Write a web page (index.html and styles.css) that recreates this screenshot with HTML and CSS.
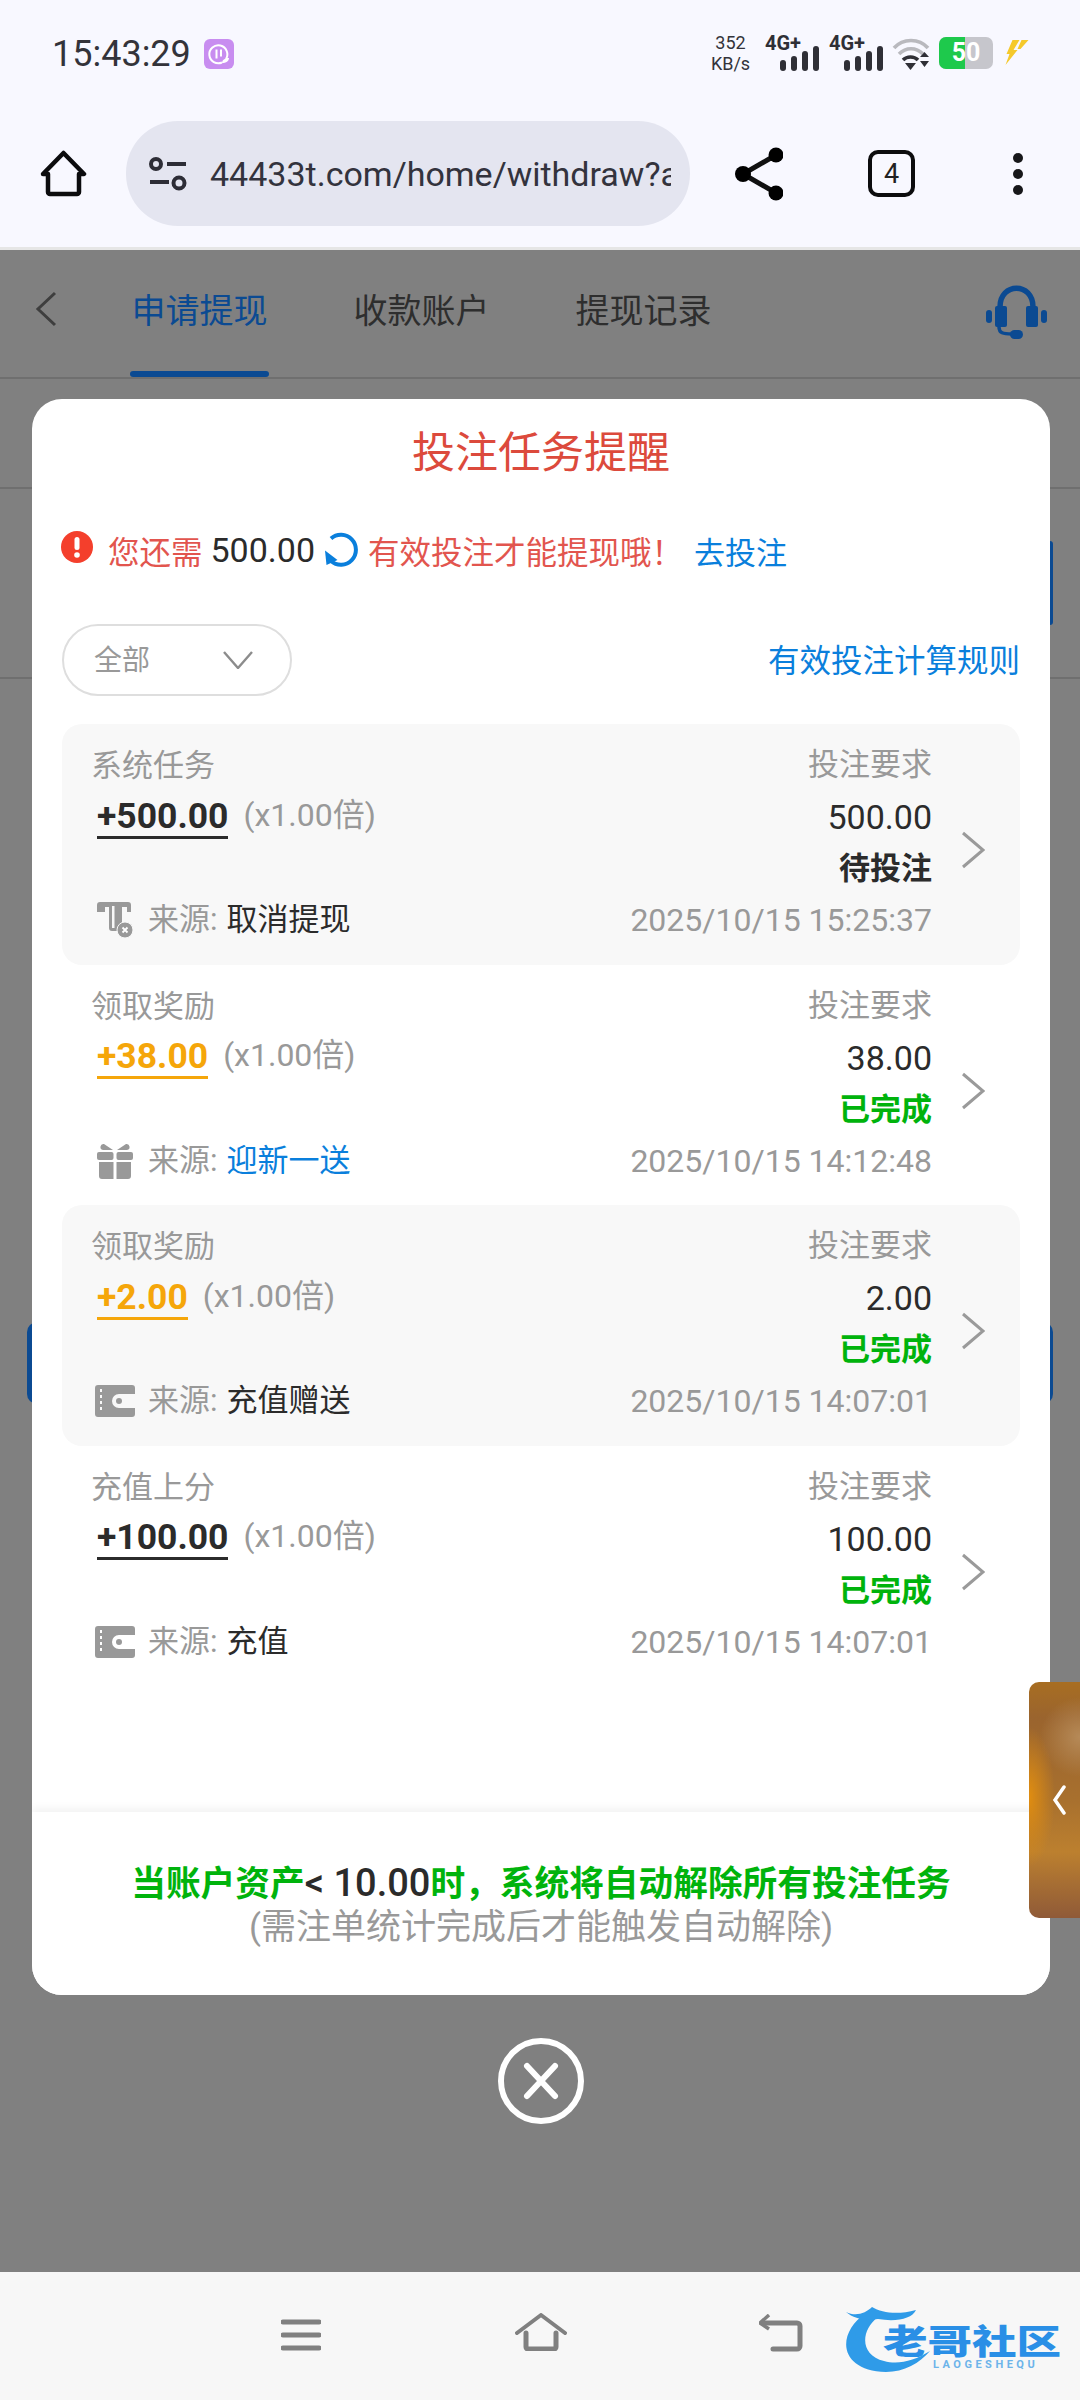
FILE: index.html
```html
<!DOCTYPE html>
<html lang="zh-CN">
<head>
    <meta charset="UTF-8">
    <meta name="viewport" content="width=device-width, initial-scale=1.0">
    <title>投注任务提醒</title>
    <link rel="stylesheet" href="styles.css">
</head>
<body>
    <header class="chrome">
        <div class="status-bar">
            <div class="status-left">
                <span class="clock">15:43:29</span>
                <svg class="app-badge" viewBox="0 0 30 30"><rect width="30" height="30" rx="6" fill="#c88df0"/><path d="M22 20A9 9 0 1 0 18 23.500" fill="none" stroke="#fff" stroke-width="2"/><path d="M12.500 10.500v9M17 10.500v7" stroke="#fff" stroke-width="2"/><path d="M18 24c0-3 3-5 7-5 0 3-3 5-7 5z" fill="#fff"/></svg>
            </div>
            <div class="status-right">
                <div class="net-speed"><span>352</span><span>KB/s</span></div>
                <div class="signal">
                    <span class="signal-label">4G+</span>
                    <div class="bars"><i class="b1"></i><i class="b2"></i><i class="b3"></i><i class="b4"></i></div>
                </div>
                <div class="signal">
                    <span class="signal-label">4G+</span>
                    <div class="bars"><i class="b1"></i><i class="b2"></i><i class="b3"></i><i class="b4"></i></div>
                </div>
                <svg class="wifi" viewBox="0 0 38 33">
                    <path d="M2 11C11 1 27 1 36 11" fill="none" stroke="#b9b9be" stroke-width="3.600"/>
                    <path d="M7 17C14 10 24 10 31 17" fill="none" stroke="#b9b9be" stroke-width="3.600"/>
                    <path d="M11 23C15 19 22 19 26 23" fill="none" stroke="#2f2f36" stroke-width="3.600"/>
                    <path d="M13 26h11l-5.500 7z" fill="#2f2f36"/>
                    <path d="M28 20l4.500-5 4.500 5zM28 24h9l-4.500 6z" fill="#2f2f36"/>
                </svg>
                <div class="battery"><span class="battery-fill"></span><span class="battery-num">50</span></div>
                <svg class="bolt" viewBox="0 0 25 25"><path d="M9 0h7L10 10h4L2 25l4-11H3zM18 0h7L17 9h-3z" fill="#f5c92c"/></svg>
            </div>
        </div>
        <div class="url-row">
            <svg class="home-icon" viewBox="0 0 47 47"><path d="M3 24L23.500 3 44 24h-5v18a2 2 0 0 1-2 2H10a2 2 0 0 1-2-2V24z" fill="none" stroke="#0c0c0e" stroke-width="4.500" stroke-linejoin="round"/></svg>
            <div class="url-pill">
                <svg class="tune-icon" viewBox="0 0 40 34" fill="none" stroke="#2d2d36" stroke-width="4"><circle cx="8" cy="7" r="5"/><path d="M19 7h19M2 25h19"/><circle cx="31" cy="26" r="5.500"/></svg>
                <span class="url-text">44433t.com/home/withdraw?a</span>
            </div>
            <svg class="share-icon" viewBox="0 0 48 54"><path d="M41 8L8 27l33 19" fill="none" stroke="#111" stroke-width="5"/><circle cx="41" cy="8" r="7.500"/><circle cx="8" cy="27" r="8"/><circle cx="41" cy="46" r="7.500"/></svg>
            <div class="tab-count">4</div>
            <div class="more-dots"><i></i><i></i><i></i></div>
        </div>
    </header>

    <main class="page">
        <nav class="page-tabs">
            <svg class="back-icon" viewBox="0 0 22 36"><path d="M20 2L3 18l17 16" fill="none" stroke="#3e3e3e" stroke-width="3"/></svg>
            <span class="page-tab active">申请提现</span>
            <span class="page-tab">收款账户</span>
            <span class="page-tab">提现记录</span>
            <svg class="headset" viewBox="0 0 61 54" fill="#0b4a92">
                <path d="M14 26V22C14 -3 47 -3 47 22v4" fill="none" stroke="#0b4a92" stroke-width="5.500"/>
                <rect x="9" y="21" width="12" height="21" rx="2"/>
                <rect x="40" y="21" width="12" height="21" rx="2"/>
                <rect x="0" y="25" width="6" height="13" rx="3"/>
                <rect x="55" y="25" width="6" height="13" rx="3"/>
                <path d="M13 42c0 6 4 7 13 7" fill="none" stroke="#0b4a92" stroke-width="3.500"/>
                <rect x="24" y="45" width="13" height="9" rx="4.500"/>
            </svg>
        </nav>
        <div class="page-section"></div>
        <div class="page-section tall"><span class="edge-blue"></span></div>
        <div class="page-button"></div>

        <div class="overlay">
            <section class="modal">
                <h2 class="modal-title">投注任务提醒</h2>
                <div class="notice">
                    <svg class="alert-icon" viewBox="0 0 32 32"><circle cx="16" cy="16" r="16" fill="#f43f2c"/><rect x="13.500" y="6" width="5" height="13" rx="2.500" fill="#fff"/><circle cx="16" cy="24" r="2.800" fill="#fff"/></svg>
                    <span class="notice-red">您还需</span>
                    <span class="notice-num">500.00</span>
                    <svg class="refresh-icon" viewBox="0 0 36 36"><path d="M8 6.500A15 15 0 1 1 8 29" fill="none" stroke="#0a7fdc" stroke-width="4"/><path d="M2 18.500l1.500 14.500 11-5z" fill="#0a7fdc"/></svg>
                    <span class="notice-red">有效投注才能提现哦！</span>
                    <a class="notice-link">去投注</a>
                </div>
                <div class="filter-row">
                    <div class="filter-select">
                        <span>全部</span>
                        <svg viewBox="0 0 30 18"><path d="M1 1l14 16L29 1" fill="none" stroke="#8c8c8c" stroke-width="2.400"/></svg>
                    </div>
                    <a class="rule-link">有效投注计算规则</a>
                </div>

                <div class="task-list">
                    <article class="task shaded">
                        <div class="task-grid">
                            <span class="task-name">系统任务</span>
                            <span class="task-req">投注要求</span>
                            <div class="task-amount"><span class="amount dark">+500.00</span><span class="rate">(x1.00倍)</span></div>
                            <span class="task-value">500.00</span>
                            <span class="task-state pending">待投注</span>
                            <div class="task-source">
                                <svg class="src-icon" viewBox="0 0 36 36"><path d="M3 0h28a3 3 0 0 1 3 3v7h-4V5H25v21a3 3 0 0 1-3 3H15a3 3 0 0 1-3-3V5H8v5H0V3a3 3 0 0 1 3-3z" fill="#999"/><rect x="15" y="4" width="2.500" height="22" fill="#f8f8f8"/><circle cx="28" cy="28" r="8" fill="#999" stroke="#f8f8f8" stroke-width="1"/><path d="M25.500 25.500l5 5M30.500 25.500l-5 5" stroke="#fff" stroke-width="1.800"/></svg>
                                <span class="src-label">来源:</span><span class="src-value">取消提现</span>
                            </div>
                            <span class="task-time">2025/10/15 15:25:37</span>
                        </div>
                        <svg class="task-arrow" viewBox="0 0 24 38"><path d="M2 2l20 17L2 36" fill="none" stroke="#9a9a9a" stroke-width="3"/></svg>
                    </article>

                    <article class="task">
                        <div class="task-grid">
                            <span class="task-name">领取奖励</span>
                            <span class="task-req">投注要求</span>
                            <div class="task-amount"><span class="amount gold">+38.00</span><span class="rate">(x1.00倍)</span></div>
                            <span class="task-value">38.00</span>
                            <span class="task-state done">已完成</span>
                            <div class="task-source">
                                <svg class="src-icon" viewBox="0 0 36 36" fill="#999"><path d="M7 1l9 6H6a3 3 0 0 1 1-6zM29 1l-9 6h10a3 3 0 0 0-1-6z"/><rect x="0" y="9" width="16.500" height="8" rx="2"/><rect x="19.500" y="9" width="16.500" height="8" rx="2"/><path d="M2 19h14.500v17H5a3 3 0 0 1-3-3zM19.500 19H34v14a3 3 0 0 1-3 3H19.500z"/></svg>
                                <span class="src-label">来源:</span><span class="src-value link">迎新一送</span>
                            </div>
                            <span class="task-time">2025/10/15 14:12:48</span>
                        </div>
                        <svg class="task-arrow" viewBox="0 0 24 38"><path d="M2 2l20 17L2 36" fill="none" stroke="#9a9a9a" stroke-width="3"/></svg>
                    </article>

                    <article class="task shaded">
                        <div class="task-grid">
                            <span class="task-name">领取奖励</span>
                            <span class="task-req">投注要求</span>
                            <div class="task-amount"><span class="amount gold">+2.00</span><span class="rate">(x1.00倍)</span></div>
                            <span class="task-value">2.00</span>
                            <span class="task-state done">已完成</span>
                            <div class="task-source">
                                <svg class="src-icon wallet" viewBox="0 0 40 32"><path d="M3 0h34a3 3 0 0 1 3 3v6H24a7 7 0 0 0 0 14h16v6a3 3 0 0 1-3 3H3a3 3 0 0 1-3-3V3a3 3 0 0 1 3-3z" fill="#999"/><circle cx="24" cy="16" r="3" fill="#999"/><path d="M6 4v24" stroke="#f8f8f8" stroke-width="2" stroke-dasharray="3 3"/></svg>
                                <span class="src-label">来源:</span><span class="src-value">充值赠送</span>
                            </div>
                            <span class="task-time">2025/10/15 14:07:01</span>
                        </div>
                        <svg class="task-arrow" viewBox="0 0 24 38"><path d="M2 2l20 17L2 36" fill="none" stroke="#9a9a9a" stroke-width="3"/></svg>
                    </article>

                    <article class="task">
                        <div class="task-grid">
                            <span class="task-name">充值上分</span>
                            <span class="task-req">投注要求</span>
                            <div class="task-amount"><span class="amount dark">+100.00</span><span class="rate">(x1.00倍)</span></div>
                            <span class="task-value">100.00</span>
                            <span class="task-state done">已完成</span>
                            <div class="task-source">
                                <svg class="src-icon wallet" viewBox="0 0 40 32"><path d="M3 0h34a3 3 0 0 1 3 3v6H24a7 7 0 0 0 0 14h16v6a3 3 0 0 1-3 3H3a3 3 0 0 1-3-3V3a3 3 0 0 1 3-3z" fill="#999"/><circle cx="24" cy="16" r="3" fill="#999"/><path d="M6 4v24" stroke="#fff" stroke-width="2" stroke-dasharray="3 3"/></svg>
                                <span class="src-label">来源:</span><span class="src-value">充值</span>
                            </div>
                            <span class="task-time">2025/10/15 14:07:01</span>
                        </div>
                        <svg class="task-arrow" viewBox="0 0 24 38"><path d="M2 2l20 17L2 36" fill="none" stroke="#9a9a9a" stroke-width="3"/></svg>
                    </article>
                </div>

                <footer class="modal-foot">
                    <p class="foot-main">当账户资产<span class="foot-num">&lt; 10.00</span>时，系统将自动解除所有投注任务</p>
                    <p class="foot-sub">(需注单统计完成后才能触发自动解除)</p>
                </footer>
            </section>
            <svg class="close-btn" viewBox="0 0 86 86"><circle cx="43" cy="43" r="40" fill="none" stroke="#fff" stroke-width="6"/><path d="M29 28l28 30M57 28L29 58" stroke="#fff" stroke-width="6" stroke-linecap="round"/></svg>
        </div>

        <div class="side-tab">
            <svg viewBox="0 0 14 30"><path d="M12 2L3 15l9 13" fill="none" stroke="#fff" stroke-width="3.500" stroke-linecap="round"/></svg>
        </div>
    </main>

    <nav class="system-nav">
        <svg class="menu-icon" viewBox="0 0 40 32"><path d="M2 3h36M2 16h36M2 29h36" stroke="#808080" stroke-width="5" stroke-linecap="round"/></svg>
        <svg class="house-icon" viewBox="0 0 52 38"><path d="M2 20L26 2l24 18" fill="none" stroke="#808080" stroke-width="4" stroke-linecap="round" stroke-linejoin="round"/><path d="M11 20v14a2 2 0 0 0 2 2h26a2 2 0 0 0 2-2V20" fill="none" stroke="#808080" stroke-width="5" stroke-linecap="round"/></svg>
        <svg class="return-icon" viewBox="0 0 44 38"><path d="M5 9h33a3 3 0 0 1 3 3v20a3 3 0 0 1-3 3H14" fill="none" stroke="#808080" stroke-width="5" stroke-linecap="round"/><path d="M10 1L1 9l9 6" fill="none" stroke="#808080" stroke-width="3.500"/></svg>
        <div class="watermark">
            <svg class="dragon" viewBox="0 0 220 68" fill="#2f9be8">
                <path d="M24 8C-6 28 -4 66 44 67C62 67 78 58 88 46C72 56 56 60 42 56C18 50 18 26 36 12z"/>
                <path d="M4 7C14 12 24 8 30 2C40 8 56 10 74 5C70 14 54 17 36 14C24 16 12 14 4 7z"/>
            </svg>
            <span class="wm-name">老哥社区</span>
            <span class="wm-sub">LAOGESHEQU</span>
        </div>
    </nav>
</body>
</html>
```

FILE: styles.css
```css
* {
    box-sizing: border-box;
}
body {
    width: 1080px;
    height: 2400px;
    margin: 0;
    display: flex;
    flex-direction: column;
    overflow: hidden;
    font-family: Roboto, "Noto Sans CJK SC", sans-serif;
    background-color: #808080;
    color: #2b2b2b;
}
p, h2 {
    margin: 0;
    font-weight: 400;
}

/* browser chrome */
.chrome {
    height: 250px;
    background-color: #f8f8ff;
    border-bottom: 3px solid #e6e6e6;
    flex-shrink: 0;
}
.status-bar {
    height: 121px;
    padding: 37px 50px 0 52px;
    display: flex;
    justify-content: space-between;
    align-items: flex-start;
}
.status-left {
    display: flex;
    align-items: center;
    gap: 13px;
}
.clock {
    font-size: 36px;
    line-height: 34px;
    color: #33333a;
}
.app-badge {
    width: 30px;
    height: 30px;
}
.status-right {
    display: flex;
    align-items: flex-start;
    height: 36px;
}
.net-speed {
    width: 51px;
    margin: -5px 9px 0 0;
    display: flex;
    flex-direction: column;
    align-items: center;
    font-size: 18px;
    line-height: 21px;
    color: #33333a;
}
.signal {
    position: relative;
    width: 54px;
    height: 36px;
}
.signal + .signal {
    margin-left: 10px;
}
.signal-label {
    position: absolute;
    left: 0;
    top: -6px;
    font-size: 20px;
    font-weight: 700;
    color: #2f2f36;
}
.bars {
    position: absolute;
    right: 0;
    bottom: 2px;
    display: flex;
    align-items: flex-end;
    gap: 5px;
}
.bars i {
    width: 6px;
    background-color: #2f2f36;
    border-radius: 3px;
}
.bars .b1 { height: 11px; }
.bars .b2 { height: 15px; }
.bars .b3 { height: 20px; }
.bars .b4 { height: 25px; }
.wifi {
    width: 38px;
    height: 33px;
    margin-left: 9px;
}
.battery {
    position: relative;
    width: 54px;
    height: 32px;
    margin-left: 9px;
    border-radius: 7px;
    background-color: #c6c6cc;
    overflow: hidden;
}
.battery-fill {
    position: absolute;
    left: 0;
    top: 0;
    bottom: 0;
    width: 26px;
    background-color: #1ec94c;
}
.battery-num {
    position: absolute;
    left: 0;
    right: 0;
    text-align: center;
    font-size: 25px;
    line-height: 32px;
    font-weight: 700;
    color: #fff;
}
.bolt {
    width: 28px;
    height: 25px;
    margin: 3px 0 0 9px;
}
.url-row {
    display: flex;
    align-items: center;
    height: 105px;
}
.home-icon {
    width: 47px;
    height: 47px;
    margin-left: 40px;
}
.url-pill {
    width: 564px;
    height: 105px;
    margin-left: 39px;
    padding-left: 22px;
    border-radius: 52px;
    background-color: #e4e5f0;
    display: flex;
    align-items: center;
    overflow: hidden;
}
.tune-icon {
    width: 40px;
    height: 34px;
    flex-shrink: 0;
}
.url-text {
    width: 461px;
    margin-left: 22px;
    overflow: hidden;
    white-space: nowrap;
    font-size: 34px;
    color: #33333d;
}
.share-icon {
    width: 48px;
    height: 54px;
    margin-left: 45px;
}
.tab-count {
    width: 47px;
    height: 47px;
    margin-left: 85px;
    border: 4.500px solid #0c0c0e;
    border-radius: 10px;
    display: flex;
    justify-content: center;
    align-items: center;
    font-size: 27px;
    color: #222;
}
.more-dots {
    margin-left: 98px;
    display: flex;
    flex-direction: column;
    gap: 6px;
}
.more-dots i {
    width: 10px;
    height: 10px;
    border-radius: 50%;
    background-color: #17171a;
}

/* page behind the dialog */
.page {
    position: relative;
    flex: 1;
    background-color: #808080;
}
.page-tabs {
    display: flex;
    align-items: center;
    height: 129px;
    padding-bottom: 10px;
    border-bottom: 2px solid #6f6f6f;
    position: relative;
}
.back-icon {
    width: 22px;
    height: 36px;
    margin-left: 35px;
}
.page-tab {
    width: 139px;
    margin-right: 83px;
    text-align: center;
    font-size: 34px;
    color: #2e2e2e;
}
.back-icon + .page-tab {
    margin-left: 73px;
}
.page-tab.active {
    position: relative;
    color: #0b4a92;
}
.page-tab.active::after {
    content: "";
    position: absolute;
    left: 0;
    right: 0;
    bottom: -44px;
    height: 6px;
    border-radius: 3px;
    background-color: #0b4a92;
}
.headset {
    position: absolute;
    left: 986px;
    top: 35px;
    width: 61px;
    height: 54px;
}
.page-section {
    position: relative;
    height: 110px;
    border-bottom: 2px solid #6f6f6f;
}
.page-section.tall {
    height: 190px;
}
.edge-blue {
    position: absolute;
    right: 27px;
    top: 52px;
    width: 3px;
    height: 84px;
    border-radius: 0 6px 6px 0;
    background-color: #0b4a92;
}
.page-button {
    height: 82px;
    margin: 643px 27px 0;
    border-radius: 10px;
    background-color: #0b4a92;
}
.overlay {
    position: absolute;
    inset: 0;
    padding: 149px 30px 0 32px;
    display: flex;
    flex-direction: column;
    align-items: center;
}
.modal {
    width: 1018px;
    height: 1596px;
    border-radius: 30px;
    background-color: #fff;
    display: flex;
    flex-direction: column;
    overflow: hidden;
}
.modal-title {
    height: 107px;
    text-align: center;
    font-size: 43px;
    line-height: 108px;
    color: #dc4a3c;
}
.notice {
    display: flex;
    align-items: center;
    height: 88px;
    padding-left: 29px;
    margin-bottom: 30px;
    font-size: 31.500px;
    white-space: nowrap;
}
.alert-icon {
    width: 32px;
    height: 32px;
    margin: -6px 15px 0 0;
}
.notice-red {
    color: #e2554e;
}
.notice-num {
    margin: 0 8px 0 8px;
    font-size: 34px;
    color: #2b2b2b;
}
.refresh-icon {
    width: 36px;
    height: 36px;
    margin-right: 9px;
}
.notice-link {
    margin-left: 11px;
    font-size: 31px;
    color: #0a7fdc;
}
.filter-row {
    display: flex;
    justify-content: space-between;
    align-items: center;
    padding: 0 30px;
    height: 72px;
    margin-bottom: 28px;
}
.filter-select {
    width: 230px;
    height: 72px;
    padding: 0 37px 0 30px;
    border: 2px solid #dedede;
    border-radius: 36px;
    display: flex;
    justify-content: space-between;
    align-items: center;
    font-size: 28px;
    color: #999;
}
.filter-select span {
    padding-bottom: 5px;
}
.filter-select svg {
    width: 30px;
    height: 18px;
}
.rule-link {
    padding-bottom: 5px;
    font-size: 31.500px;
    color: #0a7fdc;
}
.task-list {
    flex: 1;
    padding: 0 30px;
}
.task {
    height: 240.500px;
    display: flex;
    align-items: center;
    border-radius: 20px;
}
.task.shaded {
    background-color: #f8f8f8;
}
.task-grid {
    width: 870px;
    height: 100%;
    padding: 15px 0 18px 29px;
    display: grid;
    grid-template-columns: 1fr auto;
    grid-template-rows: repeat(4, 52px);
    align-items: center;
    line-height: 40px;
}
.task-name {
    grid-column: 1;
    padding-top: 2px;
    font-size: 31px;
    color: #999;
}
.task-req {
    grid-column: 2;
    text-align: right;
    font-size: 31px;
    color: #999;
}
.task-amount {
    grid-column: 1;
    display: flex;
    align-items: flex-start;
    margin-left: 6px;
}
.amount {
    font-size: 35.500px;
    font-weight: 700;
    line-height: 40px;
    border-bottom: 3px solid;
}
.amount.dark {
    color: #2b2b2b;
}
.amount.gold {
    color: #f5a60a;
}
.rate {
    margin-left: 15px;
    font-size: 32px;
    line-height: 38px;
    color: #999;
}
.task-value {
    grid-column: 2;
    text-align: right;
    font-size: 34px;
    color: #2b2b2b;
}
.task-state {
    grid-column: 2;
    grid-row: 3;
    text-align: right;
    font-size: 31px;
    font-weight: 700;
}
.task-state.pending {
    color: #2b2b2b;
}
.task-state.done {
    color: #00b30c;
}
.task-source {
    grid-column: 1;
    grid-row: 4;
    display: flex;
    align-items: center;
    margin-left: 6px;
    padding-bottom: 2px;
    font-size: 31px;
}
.src-icon {
    width: 36px;
    height: 36px;
    margin-right: 15px;
    flex-shrink: 0;
}
.src-icon.wallet {
    width: 40px;
    height: 32px;
    margin-left: -2px;
    margin-right: 13px;
}
.src-label {
    color: #999;
    margin-right: 9px;
}
.src-value {
    color: #2b2b2b;
}
.src-value.link {
    color: #0a7fdc;
}
.task-time {
    grid-column: 2;
    grid-row: 4;
    padding-bottom: 2px;
    text-align: right;
    font-size: 32px;
    color: #999;
}
.task-arrow {
    width: 24px;
    height: 38px;
    margin: 12px 0 0 29px;
}
.modal-foot {
    height: 183px;
    padding-top: 49px;
    text-align: center;
    background-color: #fff;
    box-shadow: 0 -4px 8px rgba(0, 0, 0, 0.05);
    position: relative;
}
.foot-main {
    font-size: 34.700px;
    line-height: 44px;
    font-weight: 700;
    color: #00b30c;
    white-space: nowrap;
}
.foot-num {
    font-size: 38px;
    font-weight: 500;
    color: #2b2b2b;
}
.foot-sub {
    font-size: 35px;
    line-height: 44px;
    color: #999;
}
.close-btn {
    width: 86px;
    height: 86px;
    margin-top: 43px;
}
.side-tab {
    position: absolute;
    right: 0;
    top: 1432px;
    width: 51px;
    height: 236px;
    border-radius: 10px 0 0 10px;
    background:
        radial-gradient(ellipse 26px 70px at 0 115px, #e08d10 0%, rgba(224, 141, 16, 0) 100%),
        radial-gradient(ellipse 40px 40px at 100% 55px, #b68a58 0%, rgba(182, 138, 88, 0) 100%),
        linear-gradient(180deg, #a86e22 0%, #9a642e 15%, #a8702e 50%, #bc802f 72%, #8f5a38 100%);
    display: flex;
    justify-content: flex-end;
    align-items: center;
}
.side-tab svg {
    width: 14px;
    height: 30px;
    margin-right: 14px;
}

/* system navigation */
.system-nav {
    position: relative;
    height: 128px;
    flex-shrink: 0;
    background-color: #f7f7f7;
    display: flex;
    align-items: center;
    padding-left: 281px;
}
.menu-icon {
    width: 40px;
    height: 32px;
    margin-top: -2px;
}
.house-icon {
    width: 52px;
    height: 38px;
    margin: -8px 0 0 194px;
}
.return-icon {
    width: 44px;
    height: 38px;
    margin: -6px 0 0 192px;
}
.watermark {
    position: absolute;
    left: 842px;
    top: 33px;
    width: 220px;
    height: 68px;
}
.dragon {
    position: absolute;
    left: 0;
    top: 0;
    width: 220px;
    height: 68px;
}
.wm-name {
    position: absolute;
    left: 41px;
    top: 20px;
    font-size: 34px;
    line-height: 34px;
    font-weight: 900;
    white-space: nowrap;
    color: #2a8fe6;
    transform: scaleX(1.31);
    transform-origin: left center;
}
.wm-sub {
    position: absolute;
    left: 91px;
    top: 54px;
    font-size: 11px;
    line-height: 12px;
    font-weight: 700;
    letter-spacing: 3.500px;
    color: #6db4ea;
}
```
